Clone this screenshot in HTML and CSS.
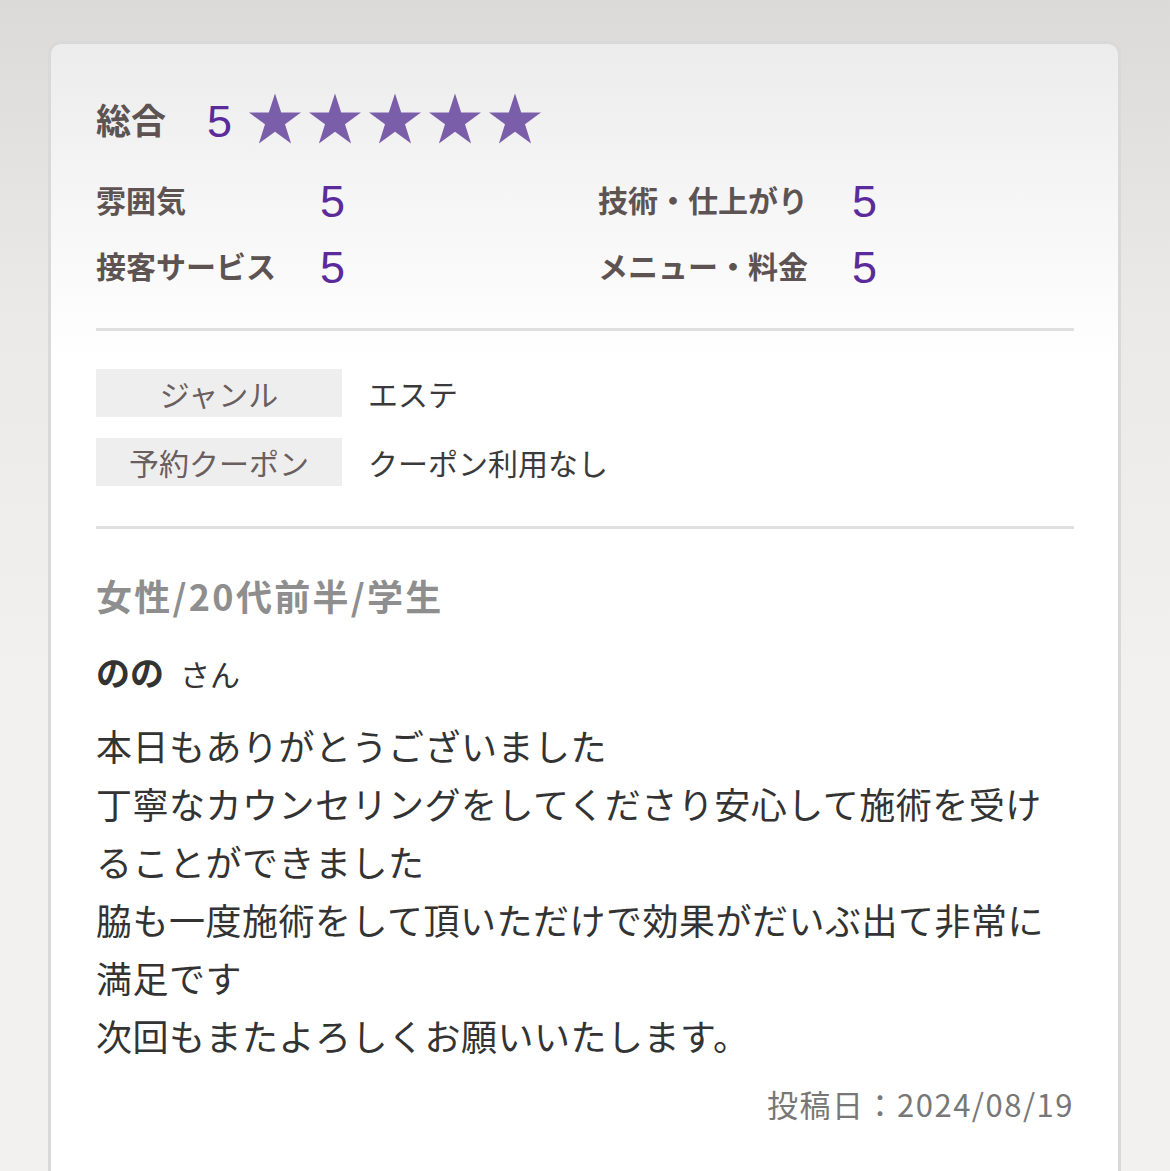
FILE: index.html
```html
<!DOCTYPE html>
<html lang="ja">
<head>
<meta charset="utf-8">
<title>口コミ</title>
<link rel="stylesheet" href="styles.css">
</head>
<body>
<div class="page">
  <div class="card">
    <div class="overall">
      <span class="overall-label">総合</span>
      <span class="overall-score">5</span>
      <span class="stars">
        <svg class="star" viewBox="0 0 52 50"><polygon points="26,0 32.2,19 52,19 36,30.8 42.1,50 26,38.2 9.9,50 16,30.8 0,19 19.8,19"/></svg>
        <svg class="star" viewBox="0 0 52 50"><polygon points="26,0 32.2,19 52,19 36,30.8 42.1,50 26,38.2 9.9,50 16,30.8 0,19 19.8,19"/></svg>
        <svg class="star" viewBox="0 0 52 50"><polygon points="26,0 32.2,19 52,19 36,30.8 42.1,50 26,38.2 9.9,50 16,30.8 0,19 19.8,19"/></svg>
        <svg class="star" viewBox="0 0 52 50"><polygon points="26,0 32.2,19 52,19 36,30.8 42.1,50 26,38.2 9.9,50 16,30.8 0,19 19.8,19"/></svg>
        <svg class="star" viewBox="0 0 52 50"><polygon points="26,0 32.2,19 52,19 36,30.8 42.1,50 26,38.2 9.9,50 16,30.8 0,19 19.8,19"/></svg>
      </span>
    </div>
    <div class="sub-ratings">
      <div class="sub-col">
        <span class="sub-label">雰囲気</span><span class="sub-score">5</span>
        <span class="sub-label">接客サービス</span><span class="sub-score">5</span>
      </div>
      <div class="sub-col">
        <span class="sub-label">技術・仕上がり</span><span class="sub-score">5</span>
        <span class="sub-label">メニュー・料金</span><span class="sub-score">5</span>
      </div>
    </div>
    <hr class="divider first">
    <div class="info">
      <div class="info-row"><span class="info-label">ジャンル</span><span class="info-value">エステ</span></div>
      <div class="info-row"><span class="info-label">予約クーポン</span><span class="info-value">クーポン利用なし</span></div>
    </div>
    <hr class="divider second">
    <p class="profile">女性/20代前半/学生</p>
    <p class="name"><span class="name-main">のの</span><span class="name-suffix">さん</span></p>
    <p class="body">本日もありがとうございました<br>丁寧なカウンセリングをしてくださり安心して施術を受けることができました<br>脇も一度施術をして頂いただけで効果がだいぶ出て非常に満足です<br>次回もまたよろしくお願いいたします。</p>
    <p class="date">投稿日：2024/08/19</p>
  </div>
</div>
</body>
</html>
```

FILE: styles.css
```css
html, body {
  margin: 0;
  padding: 0;
}
body {
  background: linear-gradient(to bottom, #dbdad8 0px, #eae9e7 300px, #f2f1ef 700px);
  height: 1171px;
  font-family: "Noto Sans CJK JP", "Noto Sans", sans-serif;
  overflow: hidden;
}
.page {
  padding: 41px 49px 0 48px;
}
.card {
  box-sizing: border-box;
  min-height: 1130px;
  border: 3px solid #d9d9d9;
  border-bottom: none;
  border-radius: 13px 13px 0 0;
  background: linear-gradient(to bottom, #ececec 0px, #f7f7f7 180px, #ffffff 320px);
  padding: 48px 44px 30px 45px;
}
.overall {
  display: flex;
  align-items: center;
  height: 52px;
}
.overall-label {
  font-size: 35px;
  font-weight: 700;
  color: #5e5353;
  line-height: 1;
  margin-right: 41px;
}
.overall-score {
  font-family: "Liberation Sans", Arial, sans-serif;
  font-size: 45px;
  color: #5b2b9b;
  line-height: 1;
  margin-right: 17px;
  position: relative;
  top: 3px;
}
.stars {
  display: flex;
  gap: 8px;
}
.star {
  width: 52px;
  height: 51px;
  fill: #7b5ea9;
}
.sub-ratings {
  display: grid;
  grid-template-columns: 502px 1fr;
  margin-top: 22px;
}
.sub-col {
  display: grid;
  grid-template-columns: max-content 1fr;
  column-gap: 44px;
  grid-auto-rows: 66px;
  align-items: center;
}
.sub-label {
  font-size: 30px;
  font-weight: 700;
  color: #5e5353;
  line-height: 1;
}
.sub-score {
  font-family: "Liberation Sans", Arial, sans-serif;
  font-size: 45px;
  color: #5b2b9b;
  line-height: 1;
  position: relative;
  top: 2px;
}
.divider {
  border: none;
  height: 3px;
  background: #e0e0e0;
  margin: 0;
}
.divider.first {
  margin-top: 30px;
}
.info {
  display: flex;
  flex-direction: column;
  gap: 21px;
  margin-top: 38px;
}
.info-row {
  display: flex;
  align-items: center;
}
.info-label {
  width: 246px;
  height: 48px;
  background: #eeeeee;
  display: flex;
  align-items: center;
  justify-content: center;
  font-size: 30px;
  color: #6a5e5e;
  line-height: 1;
}
.info-value {
  margin-left: 26px;
  font-size: 30px;
  color: #3a3a3a;
  line-height: 1;
}
.divider.second {
  margin-top: 40px;
}
.profile {
  margin: 41px 0 0;
  font-size: 36px;
  font-weight: 700;
  color: #8e8e8e;
  line-height: 50px;
  letter-spacing: 2.3px;
}
.name {
  margin: 27px 0 0;
  line-height: 50px;
  color: #333;
}
.name-main {
  font-size: 34px;
  font-weight: 700;
}
.name-suffix {
  font-size: 30px;
  margin-left: 16px;
}
.body {
  margin: 12px 0 0;
  font-size: 36px;
  line-height: 58px;
  letter-spacing: 0.5px;
  color: #333;
}
.date {
  margin: 20px 0 0;
  text-align: right;
  font-size: 31px;
  line-height: 40px;
  letter-spacing: 1.5px;
  color: #777;
}
```
